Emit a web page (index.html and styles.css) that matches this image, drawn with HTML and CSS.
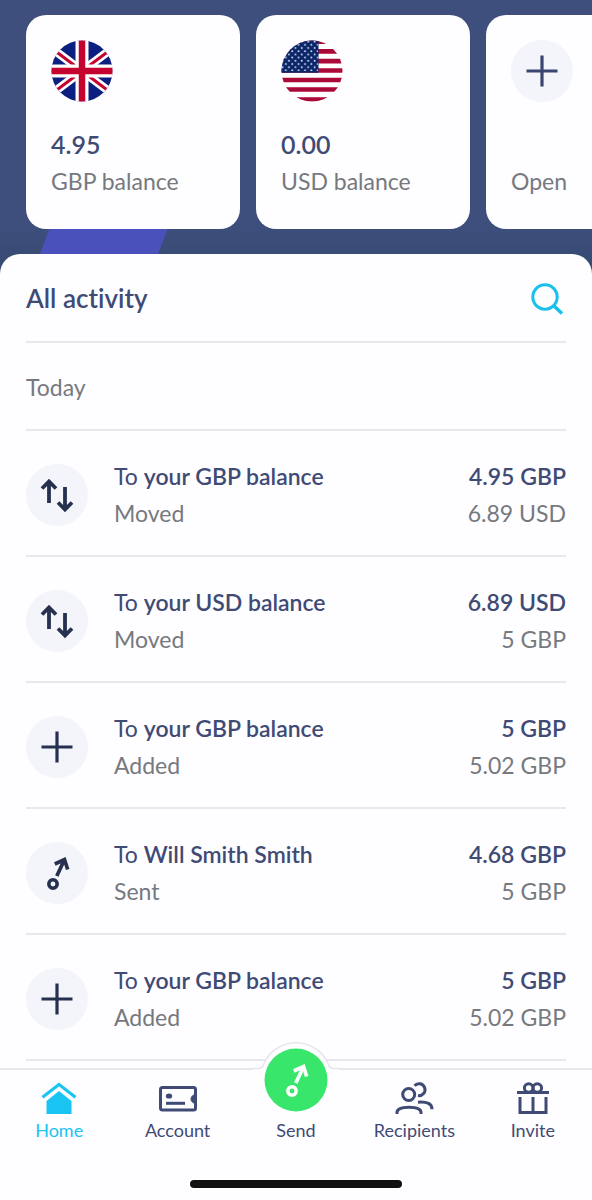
FILE: index.html
```html
<!DOCTYPE html>
<html lang="en">
<head>
<meta charset="utf-8">
<meta name="viewport" content="width=device-width, initial-scale=1">
<title>Home</title>
<link rel="stylesheet" href="styles.css">
</head>
<body>
<svg class="defs" aria-hidden="true">
  <symbol id="plus" viewBox="0 0 62 62"><path d="M31 15.500v31M15.500 31h31" fill="none" stroke="currentColor" stroke-width="3.200"/></symbol>
  <symbol id="swap" viewBox="0 0 62 62"><path d="M23 39V18M16 24.500l7-7 7 7M39 23v22M32 38.500l7 7 7-7" fill="none" stroke="currentColor" stroke-width="3.800"/></symbol>
  <symbol id="send" viewBox="0 0 62 62"><circle cx="27" cy="42" r="4.200" fill="none" stroke="currentColor" stroke-width="3.500"/><path d="M30.800 34L38.300 18M28.800 22L38.500 17.500 41.700 27.500" fill="none" stroke="currentColor" stroke-width="3.700"/></symbol>
</svg>
<div class="app">
  <header class="hero">
    <div class="cards">
      <a class="card" href="#gbp">
        <svg class="flag" viewBox="0 0 62 62" role="img" aria-label="United Kingdom flag">
          <clipPath id="disc"><circle cx="31" cy="31" r="30.500"/></clipPath>
          <g clip-path="url(#disc)">
            <path fill="#0b1f80" d="M0 0h62v62H0z"/>
            <path stroke="#fff" stroke-width="8.500" d="M-5 4L67 58M-5 58L67 4"/>
            <path stroke="#c4042f" stroke-width="3" d="M-5 4L25 26.500M-5 58L25 35.500M67 4L37 26.500M67 58L37 35.500"/>
            <path stroke="#fff" stroke-width="13" d="M31 0v62M0 31h62"/>
            <path stroke="#c4042f" stroke-width="6.500" d="M31 0v62M0 31h62"/>
          </g>
        </svg>
        <strong class="amount">4.95</strong>
        <span class="muted">GBP balance</span>
      </a>
      <a class="card" href="#usd">
        <svg class="flag" viewBox="0 0 62 62" role="img" aria-label="United States flag">
          <defs><pattern id="stars" width="6.400" height="6.400" patternUnits="userSpaceOnUse"><circle cx="1.600" cy="1.600" r="1" fill="#dfe6f5"/><circle cx="4.800" cy="4.800" r="1" fill="#dfe6f5"/></pattern></defs>
          <g clip-path="url(#disc)">
            <path fill="#fff" d="M0 0h62v62H0z"/>
            <path stroke="#aa0a38" stroke-width="4.700" d="M0 1.700h62M0 11.400h62M0 21.100h62M0 30.500h62M0 40h62M0 49.500h62M0 59.500h62"/>
            <path fill="#0a2568" d="M0 0h37.500v32.800H0z"/>
            <path fill="url(#stars)" d="M0 0h37v31H0z"/>
          </g>
        </svg>
        <strong class="amount">0.00</strong>
        <span class="muted">USD balance</span>
      </a>
      <a class="card" href="#open">
        <svg class="disc" aria-hidden="true"><use href="#plus"/></svg>
        <span class="muted open">Open</span>
      </a>
    </div>
  </header>

  <main class="sheet">
    <div class="bar">
      <h1 class="title">All activity</h1>
      <button class="search" aria-label="Search"><svg viewBox="0 0 34 34" width="34" height="34"><circle cx="15" cy="15" r="12.200" fill="none" stroke="currentColor" stroke-width="3"/><path d="M23.500 23.500l8.500 8" stroke="currentColor" stroke-width="3.500"/></svg></button>
    </div>
    <h2 class="day">Today</h2>
    <ul class="list">
      <li class="row"><svg class="disc" aria-hidden="true"><use href="#swap"/></svg><div class="what"><p class="line">To <b>your GBP balance</b></p><p class="muted">Moved</p></div><div class="sum"><p class="line"><b>4.95 GBP</b></p><p class="muted">6.89 USD</p></div></li>
      <li class="row"><svg class="disc" aria-hidden="true"><use href="#swap"/></svg><div class="what"><p class="line">To <b>your USD balance</b></p><p class="muted">Moved</p></div><div class="sum"><p class="line"><b>6.89 USD</b></p><p class="muted">5 GBP</p></div></li>
      <li class="row"><svg class="disc" aria-hidden="true"><use href="#plus"/></svg><div class="what"><p class="line">To <b>your GBP balance</b></p><p class="muted">Added</p></div><div class="sum"><p class="line"><b>5 GBP</b></p><p class="muted">5.02 GBP</p></div></li>
      <li class="row"><svg class="disc" aria-hidden="true"><use href="#send"/></svg><div class="what"><p class="line">To <b>Will Smith Smith</b></p><p class="muted">Sent</p></div><div class="sum"><p class="line"><b>4.68 GBP</b></p><p class="muted">5 GBP</p></div></li>
      <li class="row"><svg class="disc" aria-hidden="true"><use href="#plus"/></svg><div class="what"><p class="line">To <b>your GBP balance</b></p><p class="muted">Added</p></div><div class="sum"><p class="line"><b>5 GBP</b></p><p class="muted">5.02 GBP</p></div></li>
    </ul>
  </main>

  <nav class="nav">
    <div class="tabs">
      <a class="tab current" href="#home"><svg class="icon" viewBox="0 0 40 36"><path d="M3.500 17.300L20 4.500l16.500 12.800" fill="none" stroke="currentColor" stroke-width="3"/><path d="M20 11l12.500 10V34h-25V21z" fill="currentColor"/></svg>Home</a>
      <a class="tab" href="#account"><svg class="icon" viewBox="0 0 40 36"><rect x="2.500" y="7.500" width="35" height="22.500" rx="2" fill="none" stroke="currentColor" stroke-width="3"/><ellipse cx="11" cy="16" rx="3.200" ry="2.600" fill="currentColor"/><path d="M8 23.300h19" stroke="currentColor" stroke-width="3"/><path d="M37.500 14.500c-5.500.5-6.500 8 0 9z" fill="currentColor" stroke="currentColor"/></svg>Account</a>
      <a class="tab" href="#send-money">
        <span class="send"><svg class="bump" viewBox="0 0 84 84" aria-hidden="true"><path d="M0 30.500h5q3.500 0 5-5a35 35 0 0 1 64 0q1.500 5 5 5h5V84H0z" fill="#fefdff"/><path d="M0 30.500h5q3.500 0 5-5a35 35 0 0 1 64 0q1.500 5 5 5h5" fill="none" stroke="#e6e6ed" stroke-width="1.500"/><circle cx="42" cy="42" r="31.500" fill="#39e66c"/><svg x="11" y="11" width="62" height="62" color="#fff"><use href="#send"/></svg></svg></span>Send</a>
      <a class="tab" href="#recipients"><svg class="icon" viewBox="0 0 40 36" fill="none" stroke="currentColor" stroke-width="3"><circle cx="14.700" cy="14.500" r="6"/><path d="M3 34v-1.500q0-5.300 12-5.300T27 32.500V34M20.500 5.700a6 6 0 1 1 3.500 9.900M24 22.200q14-1 14 7"/></svg>Recipients</a>
      <a class="tab" href="#invite"><svg class="icon" viewBox="0 0 40 36" fill="none" stroke="currentColor" stroke-width="3"><path d="M4 12.500h32M7 17v15.500h26V17M20 17v15.500"/><circle cx="15.700" cy="8" r="4.300"/><circle cx="24.300" cy="8" r="4.300"/></svg>Invite</a>
    </div>
    <div class="handle"></div>
  </nav>
</div>
</body>
</html>
```
FILE: styles.css
```css
* { box-sizing: border-box; }
body {
  margin: 0;
  background: #fefdff;
  font-family: Lato, "Open Sans", sans-serif;
  font-size: 23px;
  line-height: 37px;
  font-variant-ligatures: none;
  color: #3f4b75;
}
h1, h2, p, ul { margin: 0; padding: 0; }
a { color: inherit; text-decoration: none; }
.defs { display: none; }
.app { display: flex; flex-direction: column; min-height: 100vh; }

.hero {
  padding: 15px 0 45px 26px;
  overflow: hidden;
  background:
    linear-gradient(110deg, transparent 16px, #4b51bb 17px, #4b51bb 127px, transparent 128px) 37px 214px / 150px 62px no-repeat,
    linear-gradient(#3e4f7e 220px, #384b73 260px);
}
.cards { display: flex; gap: 16px; }
.card {
  display: flex;
  flex-direction: column;
  flex: none;
  width: 214px;
  height: 214px;
  padding: 25px;
  border-radius: 20px;
  background: #fefdff;
}
.flag, .disc { flex: none; width: 62px; height: 62px; }
.disc { border-radius: 50%; background: #f3f5fa; color: #26304f; }
.card .disc { color: #3a4570; }
.amount { margin-top: 24px; font-weight: 600; font-size: 25px; }
.open { margin-top: 61px; }
.muted { color: #76797e; }

.sheet {
  flex: 1;
  margin-top: -20px;
  padding: 0 26px 7px;
  border-radius: 20px 20px 0 0;
  background: #fefdff;
}
.bar {
  display: flex;
  align-items: center;
  justify-content: space-between;
  height: 89px;
  padding: 2px 2px 0 0;
  border-bottom: 2px solid #e7e8ed;
}
.title { font-size: 26px; font-weight: 600; }
.search { display: flex; padding: 0; border: 0; background: none; color: #19c0ea; }
.day {
  padding: 26px 0 23px;
  border-bottom: 2px solid #e7e8ed;
  font-size: 23px;
  font-weight: 400;
  color: #76797e;
}
.list { list-style: none; }
.row {
  display: flex;
  align-items: center;
  gap: 26px;
  padding: 27px 0 23px;
  border-bottom: 2px solid #e7e8ed;
}
.what { flex: 1; }
.sum { text-align: right; }
b { font-weight: 600; }

.nav { position: sticky; bottom: 0; border-top: 2px solid #e6e6ed; background: #fefdff; }
.tabs { display: grid; grid-template-columns: repeat(5, 1fr); }
.tab {
  position: relative;
  display: flex;
  flex-direction: column;
  align-items: center;
  padding-top: 10px;
  font-size: 18px;
  line-height: 28px;
}
.current { color: #19c4f3; }
.icon { width: 40px; height: 36px; }
.send { height: 36px; }
.bump { position: absolute; top: -32px; left: 50%; width: 84px; height: 84px; margin-left: -42px; }
.handle { width: 212px; height: 8px; margin: 36px auto 12px; border-radius: 4px; background: #111; }
```
